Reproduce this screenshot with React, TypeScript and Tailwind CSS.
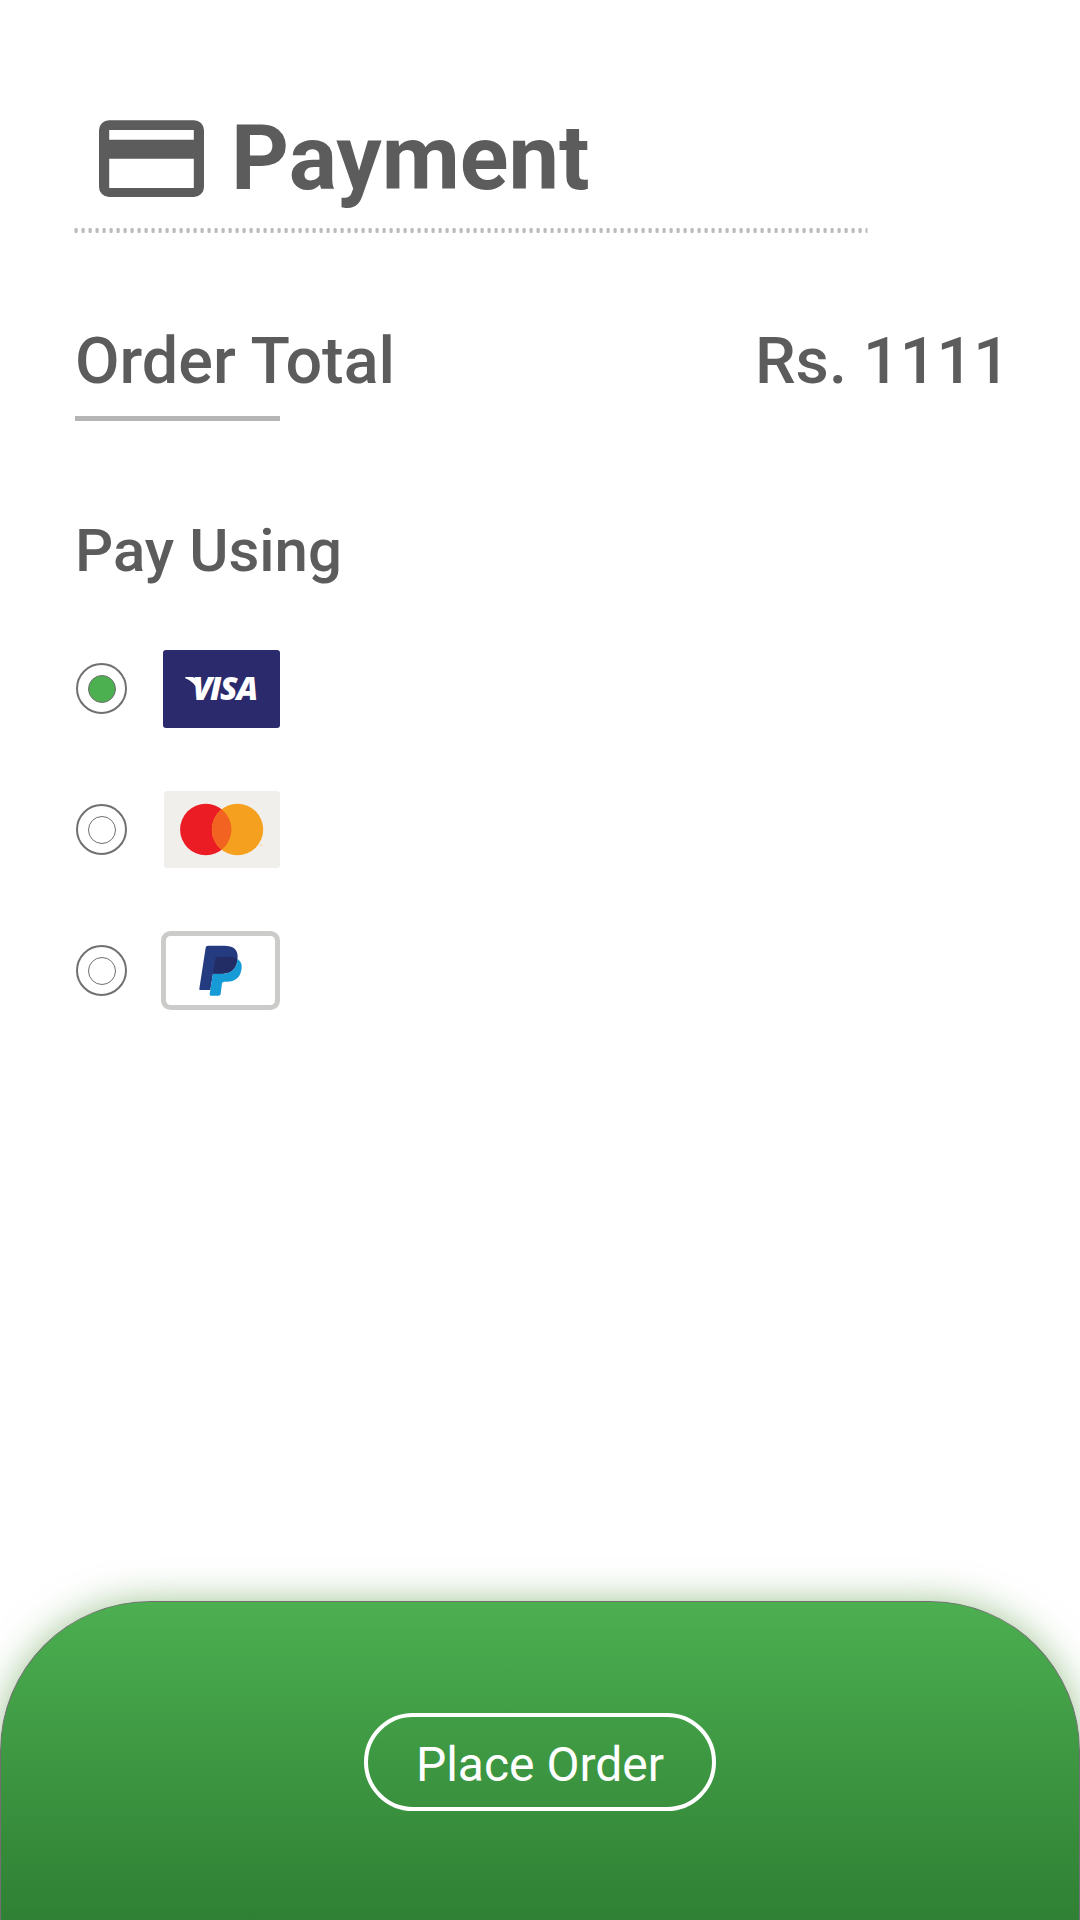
import React from "react";

function CardIcon() {
  return (
    <svg className="h-[77px] w-[105px] text-[#5c5c5c]" viewBox="0 0 105 77" fill="currentColor" fillRule="evenodd">
      <path d="M10 0.3H95A10 10 0 0 1 105 10V67A10 10 0 0 1 95 77H10A10 10 0 0 1 0 67V10A10 10 0 0 1 10 0.3ZM10.2 10V19.7H94.8V10ZM10.2 38.7V67.9H94.8V38.7Z" />
    </svg>
  );
}

function DottedLine() {
  return (
    <svg className="mt-[25px] ml-[74px] block h-[5px] w-[794px]" viewBox="0 0 794 5">
      <defs>
        <pattern id="dots" width="7" height="5" patternUnits="userSpaceOnUse">
          <rect x="0.5" y="0.1" width="3.2" height="4.8" rx="1.2" fill="#bbbbbb" />
        </pattern>
      </defs>
      <rect width="793.5" height="5" fill="url(#dots)" />
    </svg>
  );
}

function Radio({ checked }: { checked?: boolean }) {
  return (
    <svg className="h-[51px] w-[51px]" viewBox="0 0 51 51" stroke="#707070">
      <circle cx="25.5" cy="25.5" r="24.5" fill="white" strokeWidth="2" />
      <circle cx="26" cy="26" r="13.5" fill={checked ? "#4caf50" : "white"} strokeWidth="1" />
    </svg>
  );
}

function Visa() {
  return (
    <svg className="h-[78px] w-[117px] rounded-[3px] bg-[#2b2a6c]" viewBox="0 0 117 78" fill="white">
      <path d="M22.3 27H29Q32 27 33 30L36 42Q31.5 31.5 22.3 28.3Z" />
      <text x="29.5 47 57 73.5" y="50.2" fontFamily="Open Sans" fontWeight="800" fontStyle="italic" fontSize="32">
        VISA
      </text>
    </svg>
  );
}

function Mastercard() {
  return (
    <svg className="h-[77px] w-[116px] rounded-[3px] bg-[#f1efeb]" viewBox="0 0 116 77">
      <circle cx="41.8" cy="38.5" r="25.7" fill="#eb1c24" />
      <circle cx="73.5" cy="38.5" r="25.7" fill="#f6a01f" />
      <path d="M57.65 18.3A25.7 25.7 0 0 1 57.65 58.7A25.7 25.7 0 0 1 57.65 18.3Z" fill="#f26322" />
      <ellipse cx="97.5" cy="54" rx="1.3" ry="0.8" fill="#f9d29a" />
    </svg>
  );
}

function Paypal() {
  return (
    <svg className="h-[79px] w-[119px]" viewBox="303 33 357 237">
      <rect x="310.5" y="40.5" width="342" height="222" rx="21" fill="white" stroke="#cbcbca" strokeWidth="15" />
      <path fill="#253b80" d="M444 77H492C520 77 534 88 533 112C531 145 514 161 487 161H459L451 210H421Q417 210 418 206L437 83Q438 77 444 77Z" />
      <path fill="#179bd7" d="M532 117C545 124 547 138 544 150C540 174 524 185 502 185H493Q487 185 486 190L482 222Q481 227 476 227H453Q448 227 449 222L459 160L487 161C514 161 531 145 532 117Z" />
      <path fill="#222d65" d="M474 111H515Q527 112 532 118C529 147 514 161 487 161H459L466 117Q467 111 474 111Z" />
    </svg>
  );
}

function Option({ checked, children }: { checked?: boolean; children: React.ReactNode }) {
  return (
    <div className="flex h-[141px] w-[204px] items-start justify-between">
      <div className="pt-[14px]">
        <Radio checked={checked} />
      </div>
      {children}
    </div>
  );
}

export default function App() {
  return (
    <div className="flex h-[1920px] w-[1080px] flex-col overflow-hidden bg-white font-[Roboto,sans-serif] text-[#5c5c5c]">
      <header className="pt-[114px]">
        <div className="flex h-[89px] items-start pl-[99px]">
          <div className="pt-[6px]">
            <CardIcon />
          </div>
          <h1 className="ml-[27px] text-[90.2px] leading-[89px] font-bold">Payment</h1>
        </div>
        <DottedLine />
      </header>

      <section className="mt-[95px] flex justify-between pr-[70px] pl-[75px] text-[64.7px] leading-[66px] font-medium">
        <h2>Order Total</h2>
        <p>Rs. 1111</p>
      </section>
      <div className="mt-[22px] ml-[75px] h-[5px] w-[205px] bg-[#b5b5b5]" />

      <h2 className="mt-[100px] ml-[75px] text-[60px] leading-[60px] font-medium">Pay Using</h2>
      <div className="mt-[68px] ml-[76px] flex flex-col">
        <Option checked>
          <div className="pt-px">
            <Visa />
          </div>
        </Option>
        <Option>
          <div className="pt-px">
            <Mastercard />
          </div>
        </Option>
        <Option>
          <Paypal />
        </Option>
      </div>

      <footer className="mt-auto flex h-[319px] shrink-0 justify-center rounded-t-[150px] border border-b-0 border-[#707070] bg-linear-to-b from-[#4caf50] to-[#2f8034] bg-origin-border pt-[111px] shadow-[0_0_36px_rgba(67,139,43,0.5)]">
        <button className="flex h-[98px] w-[352px] items-center justify-center rounded-full border-4 border-white pt-[5px] text-[48px] leading-[56px] text-white">
          Place Order
        </button>
      </footer>
    </div>
  );
}
